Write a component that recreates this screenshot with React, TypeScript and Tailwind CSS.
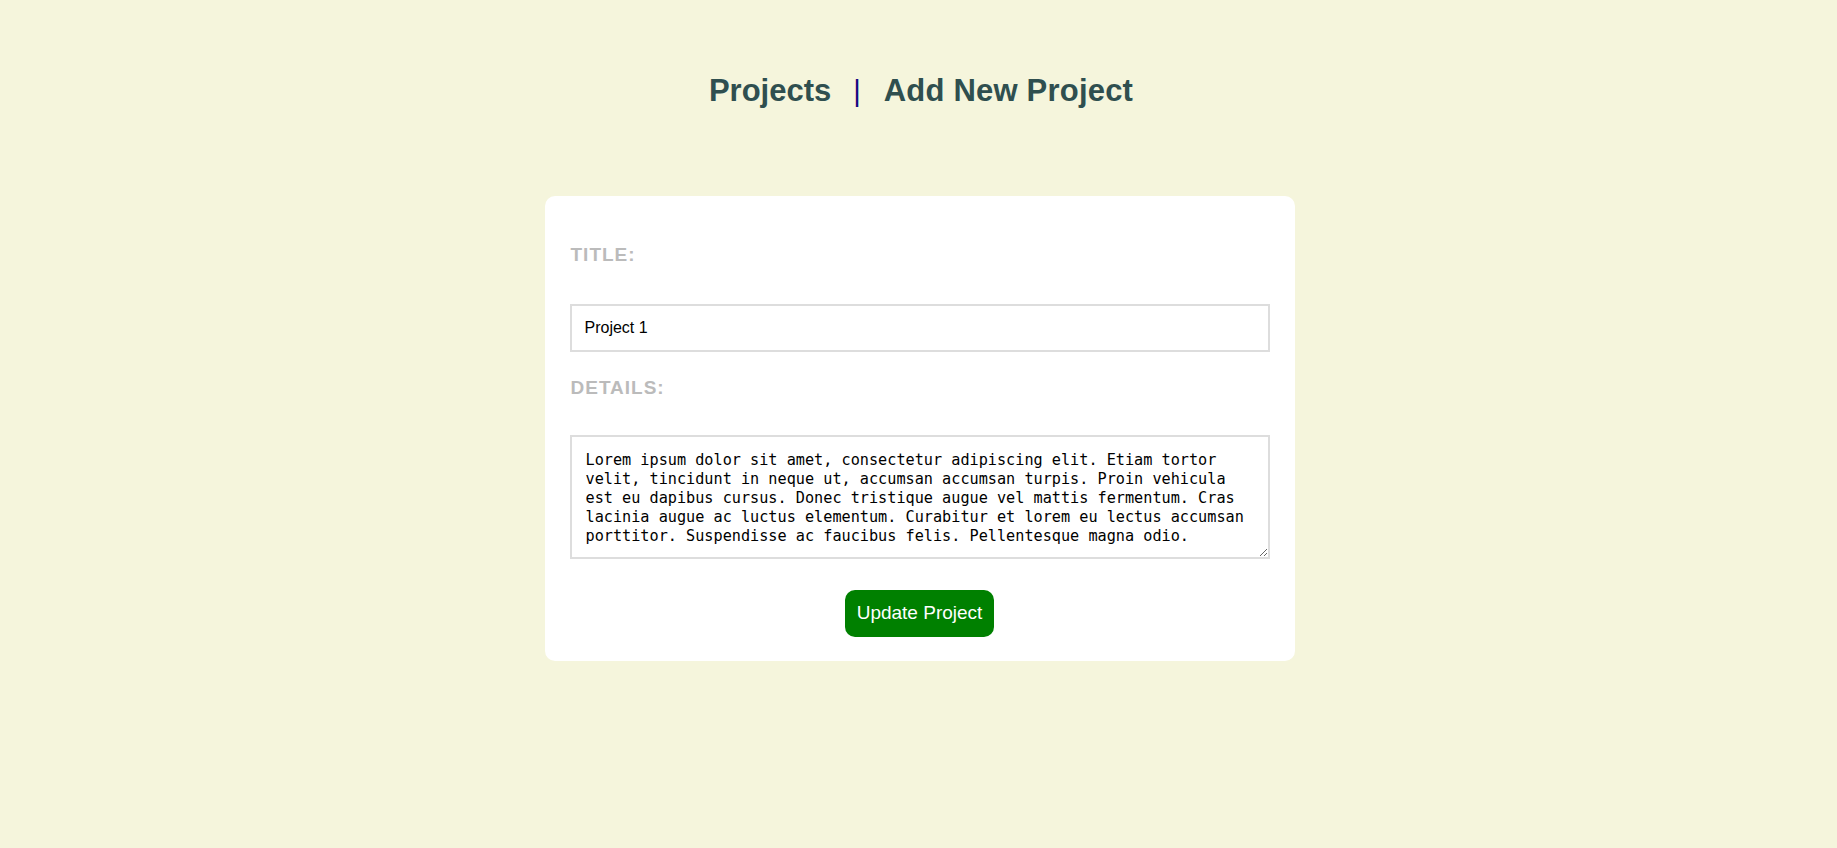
import { useState } from "react"

const lorem =
  "Lorem ipsum dolor sit amet, consectetur adipiscing elit. Etiam tortor velit, tincidunt in neque ut, accumsan accumsan turpis. Proin vehicula est eu dapibus cursus. Donec tristique augue vel mattis fermentum. Cras lacinia augue ac luctus elementum. Curabitur et lorem eu lectus accumsan porttitor. Suspendisse ac faucibus felis. Pellentesque magna odio."

const App = () => {
  const [title, setTitle] = useState("Project 1")
  const [details, setDetails] = useState(lorem)

  return (
    <div className="min-h-screen bg-[#f5f5dc] font-['Liberation_Sans',Arial,sans-serif]">
      <nav className="pt-[73px] pl-[5px] flex justify-center items-center text-[31px] leading-[36px] font-bold text-[#2f4f4f]">
        <a href="#" className="pr-[22px]">Projects</a>
        <span className="font-normal text-[29px] text-[#170a80]">|</span>
        <a href="#" className="pl-[23px] tracking-[0.2px]">Add New Project</a>
      </nav>

      <form
        className="mx-auto mt-[87px] w-[750px] translate-x-[1px] bg-white rounded-[10px] px-[25px] pt-[47px] pb-[24px]"
        onSubmit={(e) => e.preventDefault()}
      >
        <label className="block pl-[1px] text-[19px] leading-[23px] font-bold tracking-[1px] text-[#bbbbbb] uppercase">Title:</label>
        <input
          type="text"
          value={title}
          onChange={(e) => setTitle(e.target.value)}
          className="mt-[38px] block w-full h-[48px] border-2 border-[#dddddd] px-[13px] text-[16px] text-black outline-none"
        />
        <label className="block mt-[24px] pl-[1px] text-[19px] leading-[23px] font-bold tracking-[1px] text-[#bbbbbb] uppercase">Details:</label>
        <textarea
          value={details}
          onChange={(e) => setDetails(e.target.value)}
          className="mt-[36px] block w-full h-[124px] border-2 border-[#dddddd] pl-[14px] pr-[21px] pt-[14px] text-[15.2px] leading-[19px] text-black font-['DejaVu_Sans_Mono',monospace] outline-none"
        />
        <div className="flex justify-center mt-[31px]">
          <button
            type="submit"
            className="h-[47px] px-[12px] rounded-[10px] bg-[#008000] text-white text-[19px]"
          >
            Update Project
          </button>
        </div>
      </form>
    </div>
  )
}

export default App
